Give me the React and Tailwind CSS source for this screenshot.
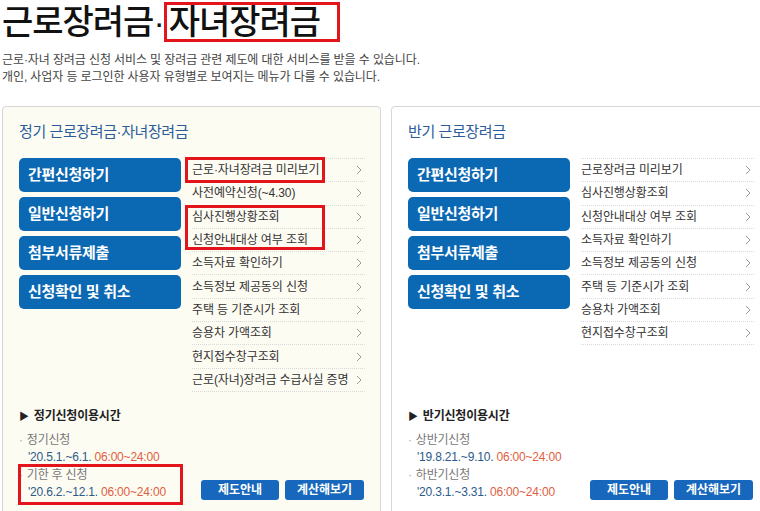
import React from "react";

const leftMenu = [
  "근로·자녀장려금 미리보기",
  "사전예약신청(~4.30)",
  "심사진행상황조회",
  "신청안내대상 여부 조회",
  "소득자료 확인하기",
  "소득정보 제공동의 신청",
  "주택 등 기준시가 조회",
  "승용차 가액조회",
  "현지접수창구조회",
  "근로(자녀)장려금 수급사실 증명",
];

const rightMenu = [
  "근로장려금 미리보기",
  "심사진행상황조회",
  "신청안내대상 여부 조회",
  "소득자료 확인하기",
  "소득정보 제공동의 신청",
  "주택 등 기준시가 조회",
  "승용차 가액조회",
  "현지접수창구조회",
];

const bigButtons = ["간편신청하기", "일반신청하기", "첨부서류제출", "신청확인 및 취소"];

function Chevron() {
  return (
    <svg width="6" height="10" viewBox="0 0 6 10" className="shrink-0">
      <polyline points="1,1 5,5 1,9" fill="none" stroke="#9a9a9a" strokeWidth="1" />
    </svg>
  );
}

function MenuList({ items, marks }) {
  return (
    <div className="relative flex-1 self-start border-t border-dotted border-[#d9d9d9]">
      {items.map((t) => (
        <div
          key={t}
          className="flex items-center justify-between h-[23.3px] border-b border-dotted border-[#d9d9d9] pr-[3px] text-[12px] text-[#333] tracking-[-0.1px]"
        >
          <span>{t}</span>
          <Chevron />
        </div>
      ))}
      {marks && (
        <>
          <div className="absolute left-[-7px] top-[-2px] w-[140px] h-[26px] border-[3px] border-[#e3141b]" />
          <div className="absolute left-[-7px] top-[46px] w-[140px] h-[45px] border-[3px] border-[#e3141b]" />
        </>
      )}
    </div>
  );
}

function Schedule({ title, rows, markLast }) {
  return (
    <div className="text-[12px] leading-[17px] tracking-[-0.2px]">
      <div className="flex items-center gap-[5px] font-bold text-[#222] mb-[7px]">
        <span className="text-[10px]">▶</span>
        <span>{title}</span>
      </div>
      {rows.map((r, i) => {
        const marked = markLast && i === rows.length - 1;
        return (
          <div key={r.label} className={i > 0 ? "relative mt-[1px]" : "relative"}>
            <div className="text-[#777]">
              <span className="text-[#aaa] mr-[4px]">·</span>
              {r.label}
            </div>
            <div className="pl-[9px] text-[#2c5a8a]">
              {r.date} <span className="text-[#e0603f]">06:00~24:00</span>
            </div>
            {marked && (
              <div className="absolute left-[-1px] top-[-3px] w-[165px] h-[41px] border-[3px] border-[#e3141b]" />
            )}
          </div>
        );
      })}
    </div>
  );
}

function Panel({ title, menu, marks, schedule, bg }) {
  return (
    <div className={`w-[379px] shrink-0 h-[420px] rounded-[4px] border border-[#d6d6d6] pl-[16px] pr-[15px] pt-[15px] ${bg}`}>
      <h2 className="text-[15px] leading-[20px] text-[#2b5c9c] tracking-[-0.4px] mb-[16px]">{title}</h2>
      <div className="flex gap-[11px] h-[234px]">
        <div className="w-[162px] flex flex-col gap-[5px]">
          {bigButtons.map((b) => (
            <div
              key={b}
              className="h-[34px] rounded-[5px] bg-[#0b68b3] pl-[9px] flex items-center text-white font-bold text-[15px] tracking-[-0.3px]"
            >
              {b}
            </div>
          ))}
        </div>
        <MenuList items={menu} marks={marks} />
      </div>
      <div className="mt-[16px] flex items-end justify-between">
        {schedule}
        <div className="flex gap-[6px] mr-[1px] mb-[1px]">
          <div className="w-[78px] h-[20px] rounded-[3px] bg-[#1768bd] text-white text-[12px] font-bold flex items-center justify-center">
            제도안내
          </div>
          <div className="w-[79px] h-[20px] rounded-[3px] bg-[#1768bd] text-white text-[12px] font-bold flex items-center justify-center">
            계산해보기
          </div>
        </div>
      </div>
    </div>
  );
}

export default function App() {
  return (
    <div className="w-[760px] h-[511px] overflow-hidden bg-white font-['Liberation_Sans','Noto_Sans_CJK_KR',sans-serif]">
      <h1 className="pl-[2px] pt-[2px] text-[34px] leading-[40px] font-medium text-[#111] tracking-[-1px] whitespace-nowrap">
        근로장려금·
        <span className="inline-block align-top border-[3px] border-[#e3141b] pl-[2px] pr-[17px] leading-[34px]">자녀장려금</span>
      </h1>
      <div className="pl-[2px] mt-[10px] text-[12px] leading-[17px] text-[#444] tracking-[-0.1px]">
        <p>근로·자녀 장려금 신청 서비스 및 장려금 관련 제도에 대한 서비스를 받을 수 있습니다.</p>
        <p>개인, 사업자 등 로그인한 사용자 유형별로 보여지는 메뉴가 다를 수 있습니다.</p>
      </div>
      <div className="flex gap-[10px] pl-[2px] mt-[20px]">
        <Panel
          title="정기 근로장려금·자녀장려금"
          menu={leftMenu}
          marks
          bg="bg-[#fdfcf3]"
          schedule={
            <Schedule
              title="정기신청이용시간"
              markLast
              rows={[
                { label: "정기신청", date: "'20.5.1.~6.1." },
                { label: "기한 후 신청", date: "'20.6.2.~12.1." },
              ]}
            />
          }
        />
        <Panel
          title="반기 근로장려금"
          menu={rightMenu}
          bg="bg-white"
          schedule={
            <Schedule
              title="반기신청이용시간"
              rows={[
                { label: "상반기신청", date: "'19.8.21.~9.10." },
                { label: "하반기신청", date: "'20.3.1.~3.31." },
              ]}
            />
          }
        />
      </div>
    </div>
  );
}
